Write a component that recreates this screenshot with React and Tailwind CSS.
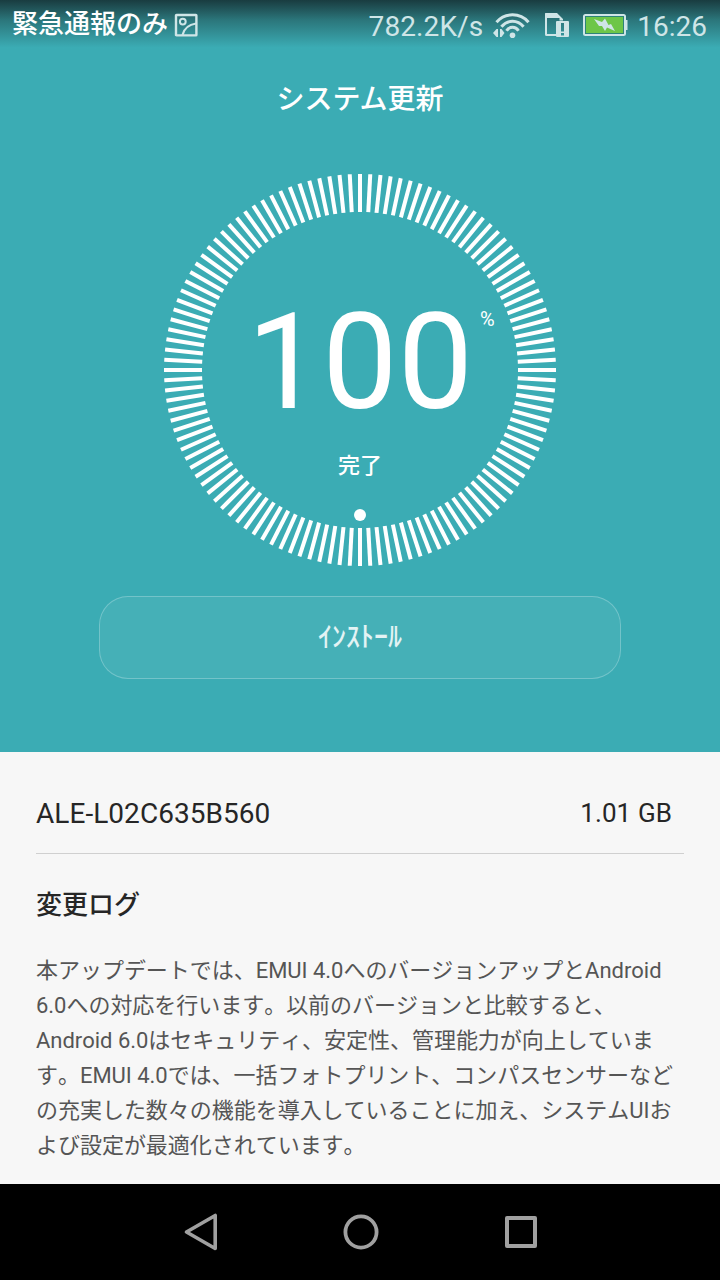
const TICK_COUNT = 120;

const changelog = [
  '本アップデートでは、EMUI 4.0へのバージョンアップとAndroid',
  '6.0への対応を行います。以前のバージョンと比較すると、',
  'Android 6.0はセキュリティ、安定性、管理能力が向上していま',
  'す。EMUI 4.0では、一括フォトプリント、コンパスセンサーなど',
  'の充実した数々の機能を導入していることに加え、システムUIお',
  'よび設定が最適化されています。',
];

const PictureIcon = () => (
  <svg className="ml-[6px] mt-[13px] h-6 w-6" viewBox="0 0 24 24" fill="none" stroke="currentColor" strokeWidth="2.4">
    <rect x="2" y="2" width="20.4" height="20.4" rx="0.5" />
    <circle cx="8.8" cy="8.6" r="2.9" strokeWidth="2" />
    <path d="M8.5 22C10 16 15 11.5 22 10.5" strokeWidth="2.2" />
  </svg>
);

const WifiIcon = () => (
  <svg className="ml-[10px] mt-3 h-[27px] w-[38px]" viewBox="0 0 38 27" fill="none" stroke="currentColor" strokeWidth="3">
    <path d="M3.5 10.2C12 0.4 27 0.4 35.5 10.2" />
    <path d="M8.4 14.8C14.5 7.4 24.5 7.4 30.6 14.8" />
    <path d="M13.5 18.8C16.5 14.2 22.5 14.2 25.5 18.8" />
    <circle cx="19.5" cy="23.2" r="2.8" fill="currentColor" stroke="none" />
    <path d="M0 21L3.5 17H5V25H3.5Z" fill="currentColor" stroke="none" />
    <path d="M11.5 21L8.5 17H7V25H8.5Z" fill="currentColor" stroke="none" />
  </svg>
);

const SimIcon = () => (
  <svg className="ml-[13px] mt-3 h-[26px] w-[26px]" viewBox="0 0 26 26" fill="currentColor">
    <path d="M1.5 1H13L19 7V8.5H15.5V6H3V22H12V24H2.5Q1 24 1 22.5V1.5Q1 1 1.5 1Z" />
    <path fillRule="evenodd" d="M13 9H24Q25 9 25 10V24Q25 25 24 25H13Q12 25 12 24V10Q12 9 13 9ZM17 11V19.5H20V11ZM17 21V23.5H20V21Z" />
  </svg>
);

const BatteryIcon = () => (
  <svg className="ml-[12px] mt-3 h-6 w-[46px]" viewBox="0 0 46 24">
    <rect x="2" y="3" width="41" height="20" rx="1.5" fill="none" stroke="currentColor" strokeWidth="2" />
    <rect x="3.5" y="4.5" width="38" height="17" fill="#6dc648" stroke="#2d8478" strokeWidth="1" />
    <rect x="43" y="8" width="2.5" height="10" fill="currentColor" />
    <path d="M12 7L20 10L23 6.5L26.5 13L29 12L33 19L25 15.5L23 19L20 14L17 14Z" fill="currentColor" />
  </svg>
);

const StatusBar = () => (
  <header className="flex h-[50px] items-start whitespace-nowrap bg-linear-to-b from-[#193c40] via-[#2b767b] via-40% to-[#3bacb4] to-95% text-[#cfe5e7]">
    <span className="ml-3 mt-[6px] text-[26px] font-medium leading-9 text-white">緊急通報のみ</span>
    <PictureIcon />
    <span className="ml-auto mt-[9px] text-[28px] leading-9 tracking-[0.1px]">782.2K/s</span>
    <WifiIcon />
    <SimIcon />
    <BatteryIcon />
    <span className="ml-[9px] mr-[13px] mt-[9px] text-[28px] leading-9">16:26</span>
  </header>
);

const ProgressDial = ({ percent }) => {
  const ticks = Array.from({ length: TICK_COUNT }, (_, i) => i * (360 / TICK_COUNT));

  return (
    <div className="relative mt-[54px] h-[392px] w-[392px]">
      <svg className="h-full w-full" viewBox="-196 -196 392 392">
        {ticks.map(angle => (
          <line
            key={angle}
            x1="0"
            y1="-196"
            x2="0"
            y2="-158"
            stroke="white"
            strokeWidth="4"
            transform={`rotate(${angle})`}
          />
        ))}
        <circle cx="0" cy="145" r="6" fill="white" />
      </svg>
      {/* Readout inside the ring */}
      <div className="absolute inset-0 flex flex-col items-center">
        <div className="mt-[111px] text-[134px] leading-[156px]">{percent}</div>
        <div className="mt-[9px] text-[22px] font-medium leading-8">完了</div>
      </div>
      <span className="absolute left-[316px] top-[133px] text-[20px] leading-6">%</span>
    </div>
  );
};

const NavBar = () => (
  <nav className="flex h-24 items-center justify-center gap-[120px] bg-black text-[#a0a0a0]">
    <svg className="h-10 w-10" viewBox="0 0 40 40" fill="none" stroke="currentColor" strokeWidth="3.6" strokeLinejoin="round">
      <path d="M35.2 3.5V36.5L6.5 20Z" />
    </svg>
    <svg className="h-10 w-10" viewBox="0 0 40 40" fill="none" stroke="currentColor" strokeWidth="3.8">
      <circle cx="21" cy="20" r="15.6" />
    </svg>
    <svg className="h-10 w-10" viewBox="0 0 40 40" fill="none" stroke="currentColor" strokeWidth="4" strokeLinejoin="round">
      <rect x="7" y="6" width="28" height="28" />
    </svg>
  </nav>
);

export default function App() {
  return (
    <div className="flex h-[1280px] w-[720px] flex-col overflow-hidden bg-[#f7f7f7] font-[Roboto,'Noto_Sans_CJK_JP',sans-serif]">
      <section className="flex h-[752px] flex-col bg-[#3bacb4] text-white">
        <StatusBar />
        <div className="flex flex-col items-center">
          <h1 className="mt-[30px] text-[28px] font-medium leading-10">システム更新</h1>
          <ProgressDial percent={100} />
          <button className="mt-[30px] h-[83px] w-[522px] rounded-[29px] border border-white/25 bg-white/5 text-[28px] font-medium text-white/85">
            ｲﾝｽﾄｰﾙ
          </button>
        </div>
      </section>

      <main className="flex-1 px-9 text-[#262626]">
        <div className="flex h-[102px] items-center justify-between border-b border-[#d0d0d0] pr-3 pt-[22px]">
          <span className="text-[28px] leading-10 tracking-[0.05px]">ALE-L02C635B560</span>
          <span className="mb-0.5 text-[26px] leading-10 tracking-[0.1px]">1.01 GB</span>
        </div>
        <h2 className="mt-[31px] text-[26px] font-medium leading-10">変更ログ</h2>
        <div className="mt-7 whitespace-nowrap text-[22px] leading-[35px] tracking-[-0.03px] text-[#555555] [font-kerning:none]">
          {changelog.map(line => (
            <p key={line}>{line}</p>
          ))}
        </div>
      </main>

      <NavBar />
    </div>
  );
}
